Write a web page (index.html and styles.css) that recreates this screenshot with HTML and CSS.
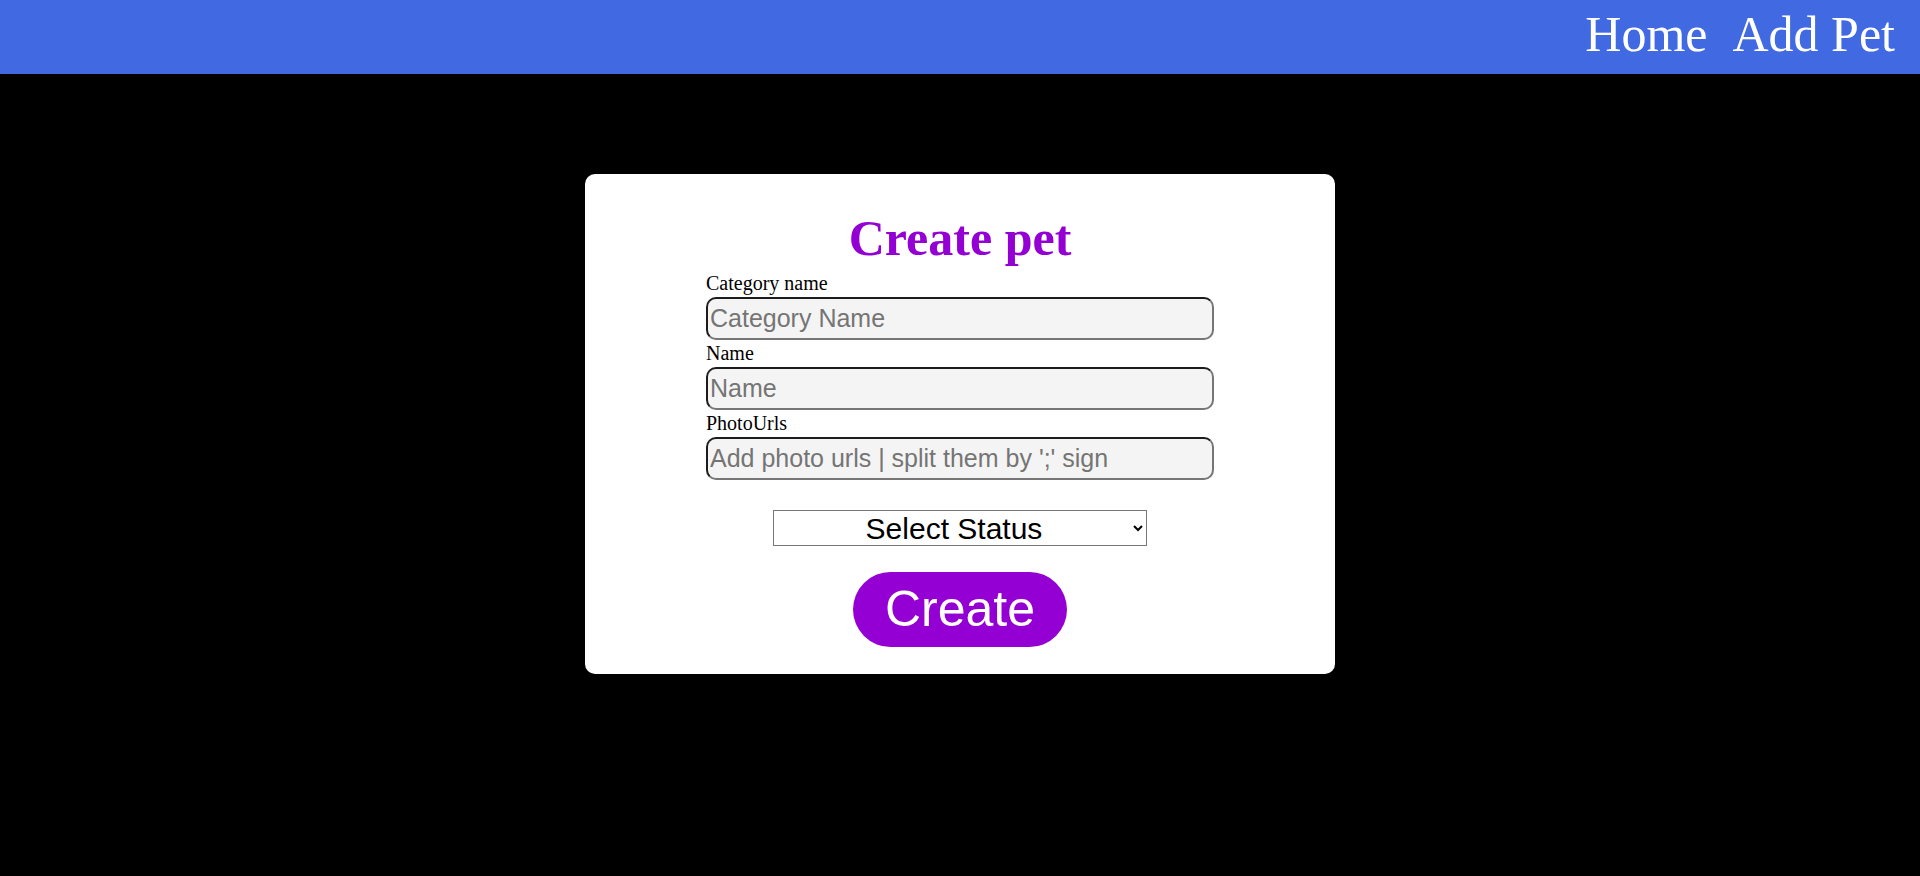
FILE: index.html
```html
<!DOCTYPE html>
<html lang="en">
<head>
<meta charset="utf-8">
<title>Create pet</title>
<link rel="stylesheet" href="styles.css">
</head>
<body>
<nav class="navbar">
  <a class="nav-link" href="#">Home</a>
  <a class="nav-link" href="#">Add Pet</a>
</nav>
<main class="page">
  <form class="card">
    <h1 class="title">Create pet</h1>
    <div class="fields">
      <label class="label" for="cat">Category name</label>
      <input class="field" id="cat" type="text" placeholder="Category Name">
      <label class="label" for="name">Name</label>
      <input class="field" id="name" type="text" placeholder="Name">
      <label class="label" for="urls">PhotoUrls</label>
      <input class="field" id="urls" type="text" placeholder="Add photo urls | split them by ';' sign">
    </div>
    <select class="status">
      <option>Select Status</option>
      <option>available</option>
      <option>pending</option>
      <option>sold</option>
    </select>
    <button class="create" type="button">Create</button>
  </form>
</main>
</body>
</html>
```
FILE: styles.css
```css
html, body {
  margin: 0;
  padding: 0;
  background: #000;
  min-height: 100%;
}

body {
  font-family: "Liberation Serif", "Times New Roman", serif;
}

.navbar {
  height: 74px;
  box-sizing: border-box;
  background: #4169e1;
  display: flex;
  justify-content: flex-end;
  align-items: flex-start;
  gap: 25px;
  padding: 6px 25px 0 0;
}

.nav-link {
  color: #fff;
  text-decoration: none;
  font-family: "Liberation Serif", "Times New Roman", serif;
  font-size: 50px;
  line-height: 56px;
}

.page {
  display: flex;
  justify-content: center;
  padding-top: 100px;
}

.card {
  width: 750px;
  box-sizing: border-box;
  background: #fff;
  border-radius: 10px;
  padding: 37px 0 27px;
  display: flex;
  flex-direction: column;
  align-items: center;
}

.title {
  margin: 0 0 6px;
  font-family: "Liberation Serif", "Times New Roman", serif;
  font-weight: bold;
  font-size: 50px;
  line-height: 55px;
  color: #9400d3;
}

.fields {
  width: 508px;
  display: flex;
  flex-direction: column;
}

.label {
  display: block;
  font-size: 20px;
  line-height: 23px;
  color: #000;
}

.field {
  height: 43px;
  box-sizing: border-box;
  margin: 2px 0;
  padding: 0 4px 0 2px;
  border: 2px solid;
  border-color: #1c1c1c #767676 #767676 #1c1c1c;
  border-radius: 10px;
  background: #f4f4f4;
  font-family: "Liberation Sans", Arial, sans-serif;
  font-size: 25px;
  color: #000;
  outline: none;
}

.field::placeholder {
  color: #757575;
}

.status {
  margin-top: 28px;
  width: 374px;
  height: 36px;
  box-sizing: border-box;
  padding: 0 4px;
  border: 1px solid #767676;
  border-radius: 0;
  background: #fff;
  font-family: "Liberation Sans", Arial, sans-serif;
  font-size: 30px;
  color: #000;
  text-align: center;
  text-align-last: center;
}

.create {
  margin-top: 26px;
  height: 75px;
  padding: 0 32px;
  border: none;
  border-radius: 38px;
  background: #9400d3;
  color: #fff;
  font-family: "Liberation Sans", Arial, sans-serif;
  font-size: 50px;
  line-height: 57px;
  cursor: pointer;
}
```
